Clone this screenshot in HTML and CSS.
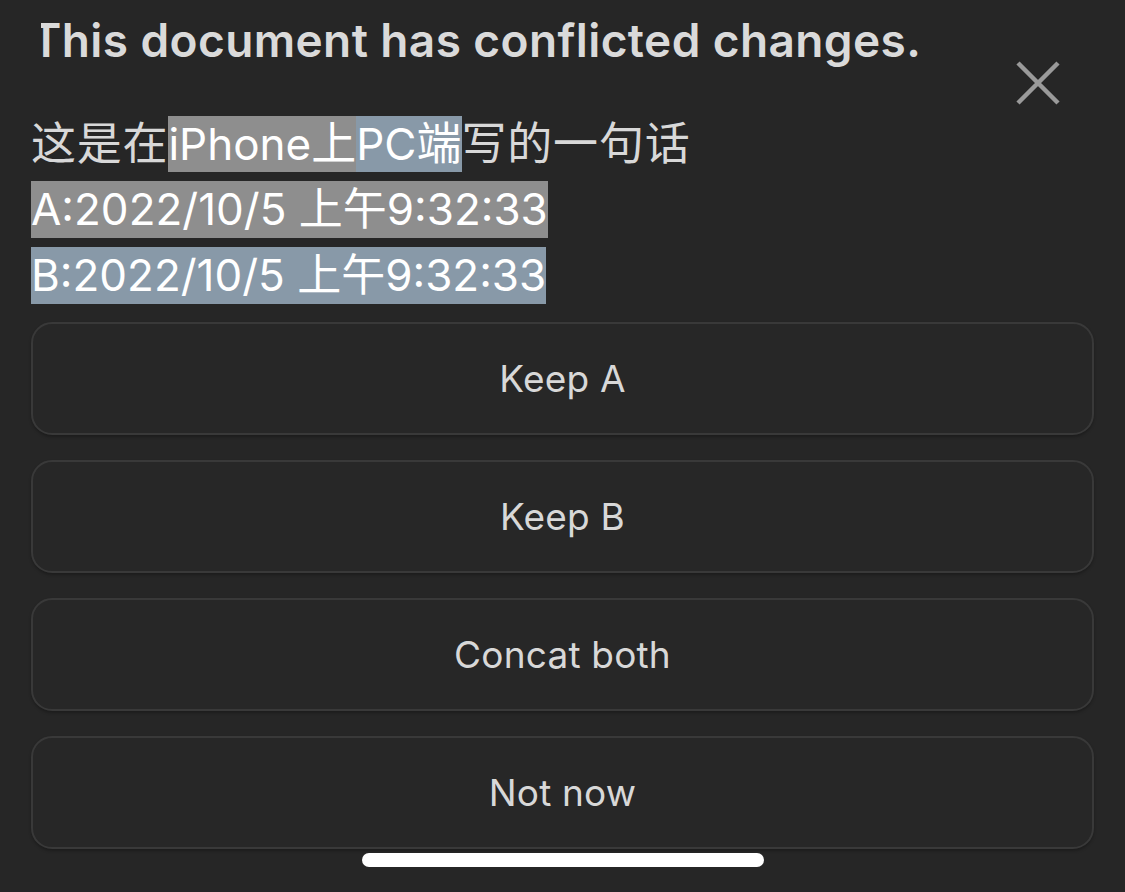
FILE: index.html
```html
<!DOCTYPE html>
<html lang="zh-CN">
<head>
<meta charset="utf-8">
<title>Conflict</title>
<link rel="stylesheet" href="styles.css">
</head>
<body>
<div class="sheet">
  <h1 class="title"><span class="title-text">This document has conflicted changes.</span></h1>
  <div class="close-row">
    <svg class="close" width="44" height="44" viewBox="0 0 44 44" aria-label="Close">
      <path d="M2 2 L42 42 M42 2 L2 42" stroke="#9a9a9a" stroke-width="4.5" stroke-linecap="butt" fill="none"/>
    </svg>
  </div>
  <div class="lines">
    <div class="line line-plain"><span class="cjk">这是在</span><span class="hl hl-a">iPhone<span class="cjk">上</span></span><span class="hl hl-b">PC<span class="cjk">端</span></span><span class="cjk">写的一句话</span></div>
    <div class="line line-a">A:2022/10/5 上午9:32:33</div>
    <div class="line line-b">B:2022/10/5 上午9:32:33</div>
  </div>
  <div class="buttons">
    <button class="btn">Keep A</button>
    <button class="btn">Keep B</button>
    <button class="btn">Concat both</button>
    <button class="btn">Not now</button>
  </div>
</div>
<div class="home-indicator"></div>
</body>
</html>
```
FILE: styles.css
```css
html, body {
  margin: 0;
  padding: 0;
  background: #262626;
}
body {
  width: 1125px;
  height: 892px;
  overflow: hidden;
  position: relative;
  font-family: Inter, "Noto Sans CJK SC", sans-serif;
}
.sheet {
  display: flex;
  flex-direction: column;
  padding: 0 31px;
}
.title {
  margin: 0;
  padding-top: 10px;
  height: 51px;
  font-size: 46px;
  line-height: 60px;
  font-weight: 600;
  color: #dadada;
  letter-spacing: 0.4px;
  white-space: nowrap;
}
.title-text {
  display: inline-block;
  clip-path: inset(0 0 0 10px);
}
.close-row {
  display: flex;
  justify-content: flex-end;
  padding-right: 34px;
  height: 44px;
  margin-top: 0;
}
.close {
  display: block;
  width: 44px;
  height: 44px;
}
.lines {
  margin-top: 11px;
  display: flex;
  flex-direction: column;
  align-items: flex-start;
  gap: 9px;
}
.line {
  font-size: 44px;
  height: 57px;
  line-height: 57px;
  white-space: nowrap;
}
.line-plain {
  color: #d8d8d8;
  height: 56px;
  line-height: 56px;
}
.cjk {
  font-size: 45px;
  letter-spacing: 0.8px;
}
.hl {
  display: inline-block;
  height: 56px;
  color: #ffffff;
}
.hl .cjk {
  letter-spacing: 0;
}
.hl-a, .line-a {
  background: #8e8e8e;
}
.hl-b, .line-b {
  background: #8899a8;
}
.line-a, .line-b {
  color: #ffffff;
}
.buttons {
  margin-top: 18px;
  display: flex;
  flex-direction: column;
  gap: 25px;
}
.btn {
  display: flex;
  align-items: center;
  justify-content: center;
  height: 113px;
  border: 2px solid #393939;
  border-radius: 21px;
  background: #272727;
  box-shadow: 0 2px 3px rgba(0, 0, 0, 0.25);
  color: #d8d8d8;
  font-family: Inter, "Noto Sans CJK SC", sans-serif;
  font-size: 37px;
  font-weight: 400;
  letter-spacing: 0.2px;
  padding: 0;
}
.home-indicator {
  position: absolute;
  left: 362px;
  top: 853px;
  width: 402px;
  height: 14px;
  border-radius: 7px;
  background: #ffffff;
}
```
